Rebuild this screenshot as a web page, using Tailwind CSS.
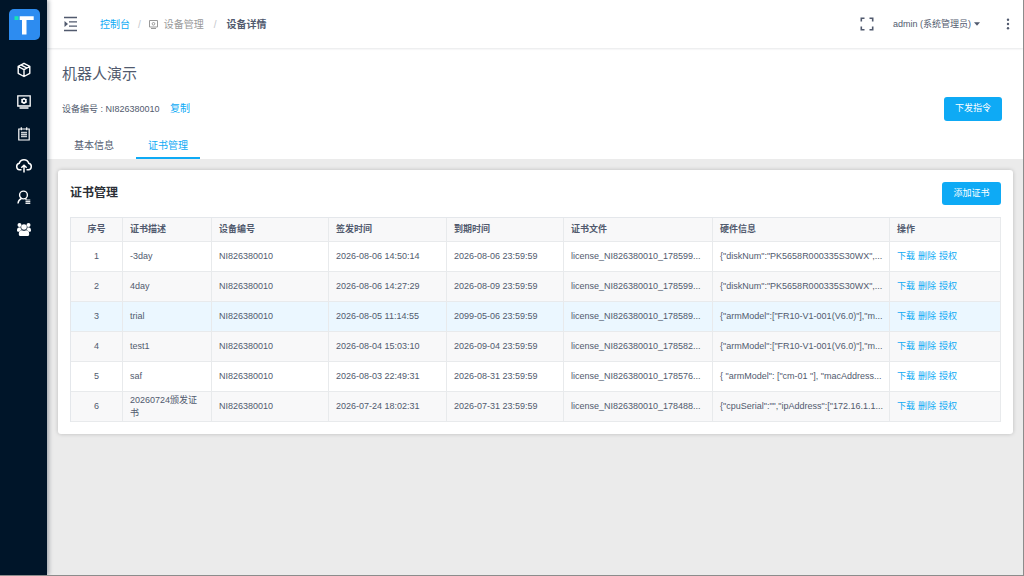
<!DOCTYPE html>
<html lang="zh-CN">
<head>
    <meta charset="UTF-8">
    <meta name="viewport" content="width=device-width, initial-scale=1.0">
    <title>设备详情</title>
    <script src="https://cdn.jsdelivr.net/npm/@tailwindcss/browser@4"></script>
</head>
<body class="flex min-h-screen bg-[#ebebeb] border-r border-b border-[#8c8c8c] font-['Liberation_Sans','Noto_Sans_CJK_SC',sans-serif] text-[9px] leading-[13px] text-[#515a6e]">
    <!-- Menu lateral -->
    <aside class="relative z-10 w-[47px] shrink-0 bg-[#001529] text-white shadow-[2px_0_4px_rgba(0,21,41,0.3)]">
        <a href="#" aria-label="首页" class="flex h-[48px] items-center justify-center pl-px">
            <svg class="size-[31px]" viewBox="0 0 31 31">
                <path d="M5 0h21a5 5 0 0 1 5 5v21a5 5 0 0 1-5 5H0V5a5 5 0 0 1 5-5z" fill="#2d8cf0"/>
                <path d="M10.700 7.200h14v3.800h-7.200v14.500h-4.500V11h-2.300z" fill="#fff"/>
                <path d="M5.500 7.200h4v3.800h-4z" fill="#19e5b4"/>
            </svg>
        </a>
        <nav class="flex flex-col items-center gap-4 pt-[14px]">
            <a href="#" aria-label="产品">
                <svg class="size-4" viewBox="0 0 16 16" fill="none" stroke="currentColor" stroke-width="1.4" stroke-linejoin="round">
                    <path d="M8 1.300l5.800 3v7L8 14.500l-5.800-3.200v-7zM2.200 4.500L8 7.700l5.800-3.200M8 7.700v6.500M4.800 2.900l6.300 3.300"/>
                </svg>
            </a>
            <a href="#" aria-label="设备">
                <svg class="size-4" viewBox="0 0 16 16" fill="none" stroke="currentColor" stroke-width="1.3">
                    <path d="M1.800 1.800h12.400v10.200H1.800zM3.500 14h9"/>
                    <circle cx="8" cy="6.900" r="1.900" stroke-width="1.500"/>
                    <path d="M8 3.900v1M8 8.900v1M5.400 5.400l.8.500M9.800 7.900l.8.500M10.600 5.400l-.8.500M6.200 7.900l-.8.500"/>
                </svg>
            </a>
            <a href="#" aria-label="任务">
                <svg class="size-4" viewBox="0 0 16 16" fill="none" stroke="currentColor" stroke-width="1.2">
                    <path d="M2.800 3h10.400v11H2.800zM5.300 1.300v3M10.700 1.300v3"/>
                    <path d="M5 6.500h6M5 8.500h6M5 10.500h6" stroke-width="1.500" opacity=".8"/>
                </svg>
            </a>
            <a href="#" aria-label="升级">
                <svg class="h-4 w-[18px]" viewBox="0 0 18 16" fill="none" stroke="currentColor" stroke-width="1.5">
                    <path d="M6.500 11.800H4.600A3.300 3.300 0 0 1 4.300 5.300 4.900 4.900 0 0 1 13.700 5.300 3.300 3.300 0 0 1 13.400 11.800h-1.900M9 14.500V7.500M6.300 9.800L9 7.200l2.700 2.600"/>
                </svg>
            </a>
            <a href="#" aria-label="用户">
                <svg class="size-4" viewBox="0 0 16 16" fill="none" stroke="currentColor" stroke-width="1.4">
                    <circle cx="7.500" cy="5" r="3.900"/>
                    <path d="M2 13.500c.2-2.500 1.500-4.200 3.400-5M9.300 8.500l1.200 1"/>
                    <path d="M9.500 10h4.800M9.500 11.700h4.800M9.500 13.400h4.800" stroke-width="1.200" opacity=".9"/>
                </svg>
            </a>
            <a href="#" aria-label="用户组">
                <svg class="size-4" viewBox="0 0 16 16" fill="currentColor">
                    <circle cx="3.500" cy="3" r="2"/>
                    <circle cx="12.500" cy="3" r="2"/>
                    <circle cx="8" cy="5" r="2.800"/>
                    <path d="M1 8.500c0-2.200 1-3.300 3.500-3.200.1 1.200.5 2 1.200 2.700-1.300.3-2 1-2.300 1.700H2c-.7 0-1-.4-1-1.200zM15 8.500c0-2.200-1-3.300-3.500-3.200-.1 1.200-.5 2-1.200 2.700 1.300.3 2 1 2.300 1.700H14c.7 0 1-.4 1-1.200z"/>
                    <path d="M2.800 12c0-2.600 1.200-3.700 3.200-3.700 1.300.7 2.700.7 4 0 2 0 3.200 1.100 3.200 3.700 0 1.400-.6 2-1.700 2h-7c-1.100 0-1.700-.6-1.700-2z"/>
                </svg>
            </a>
        </nav>
    </aside>

    <div class="flex min-w-0 flex-1 flex-col">
        <!-- Barra superior -->
        <header class="relative flex h-[48px] items-center bg-white pr-[9px] pl-4 shadow-[0_1px_2px_rgba(0,21,41,0.1)]">
            <button aria-label="折叠菜单">
                <svg class="h-4 w-[15px]" viewBox="0 0 15 16" fill="none" stroke="#515a6e" stroke-width="1.3">
                    <path d="M1 1.500h13M6 5.800h8M6 10.200h8M1 14.500h13"/>
                    <path d="M1.500 5l3.500 3-3.500 3z" fill="#515a6e" stroke="none"/>
                </svg>
            </button>
            <nav class="ml-[22px] flex items-center text-[10px]">
                <a href="#" class="text-[#0eaaf5]">控制台</a>
                <span class="mx-2 text-[#c5c8ce]">/</span>
                <a href="#" class="flex items-center gap-[6px] text-[#999]">
                    <svg class="size-[9px]" viewBox="0 0 9 9" fill="none" stroke="currentColor">
                        <path d="M.5 .5h8v6.500h-8zM2 8.500h5"/>
                        <circle cx="4.500" cy="3.800" r="1.300"/>
                    </svg>
                    设备管理
                </a>
                <span class="mx-[10px] text-[#c5c8ce]">/</span>
                <span class="font-bold text-[#515a6e]">设备详情</span>
            </nav>
            <div class="ml-auto flex items-center">
                <button aria-label="全屏">
                    <svg class="size-[14px]" viewBox="0 0 14 14" fill="none" stroke="#515a6e" stroke-width="1.600">
                        <path d="M1.300 4.500V1.300H4.500M9.500 1.300h3.200V4.500M12.700 9.500v3.200H9.500M4.500 12.700H1.300V9.500"/>
                    </svg>
                </button>
                <button class="ml-[19px] flex items-center gap-[3px]">
                    admin (系统管理员)
                    <svg class="h-1 w-[6px]" viewBox="0 0 6 4" fill="#515a6e"><path d="M0 .3h6L3 3.700z"/></svg>
                </button>
                <button aria-label="更多" class="ml-[22px]">
                    <svg class="h-[14px] w-[12px]" viewBox="0 0 12 14" fill="#515a6e">
                        <circle cx="6" cy="2.800" r="1.200"/><circle cx="6" cy="7" r="1.200"/><circle cx="6" cy="11.200" r="1.200"/>
                    </svg>
                </button>
            </div>
        </header>

        <!-- Dados do equipamento -->
        <section class="bg-white pt-[16px] pr-[21px] pl-[15px]">
            <h1 class="text-[15px] leading-5 text-[#515a6e]">机器人演示</h1>
            <div class="mt-[13px] flex h-6 items-center justify-between">
                <p>设备编号 : NI826380010 <button class="ml-2 text-[10px] text-[#0eaaf5]">复制</button></p>
                <button class="h-6 w-[58px] rounded-[3px] bg-[#0eaaf5] pb-px text-white">下发指令</button>
            </div>
            <div class="mt-[13px] flex text-[10px]">
                <button class="h-[25px] w-[64px] border-b-2 border-transparent">基本信息</button>
                <button class="ml-[10px] h-[25px] w-[64px] border-b-2 border-[#0eaaf5] text-[#0eaaf5]">证书管理</button>
            </div>
        </section>

        <!-- Certificados -->
        <main class="mt-[11px] mr-[10px] ml-[11px] rounded-[3px] bg-white p-3 shadow-[0_0_4px_rgba(0,0,0,0.2)]">
            <div class="mb-3 flex items-center justify-between">
                <h2 class="text-[12px] font-bold text-[#2b2f36]">证书管理</h2>
                <button class="h-[23px] w-[59px] rounded-[3px] bg-[#0eaaf5] pb-px text-white">添加证书</button>
            </div>
            <table class="w-full table-fixed border-separate border-spacing-0 border-t border-l border-[#e4e7eb] text-left [&_td]:h-[30px] [&_td]:border-r [&_td]:border-b [&_td]:border-[#e8eaec] [&_td]:pl-[7px] [&_th]:h-6 [&_th]:border-r [&_th]:border-b [&_th]:border-[#e8eaec] [&_th]:px-[7px] [&_td]:whitespace-nowrap [&_a]:mr-[3px] [&_a]:inline-block [&_a]:text-[#0eaaf5]">
                <colgroup>
                    <col class="w-[52px]"><col class="w-[89px]"><col class="w-[117px]"><col class="w-[118px]"><col class="w-[117px]"><col class="w-[149px]"><col class="w-[177px]"><col>
                </colgroup>
                <thead class="bg-[#f8f8f9]">
                    <tr><th class="text-center">序号</th><th>证书描述</th><th>设备编号</th><th>签发时间</th><th>到期时间</th><th>证书文件</th><th>硬件信息</th><th>操作</th></tr>
                </thead>
                <tbody>
                    <tr>
                        <td class="pr-[7px] text-center">1</td><td>-3day</td><td>NI826380010</td><td>2026-08-06 14:50:14</td><td>2026-08-06 23:59:59</td><td>license_NI826380010_178599...</td><td>{"diskNum":"PK5658R000335S30WX",...</td>
                        <td><a href="#">下载</a><a href="#">删除</a><a href="#">授权</a></td>
                    </tr>
                    <tr class="bg-[#f8f8f9]">
                        <td class="pr-[7px] text-center">2</td><td>4day</td><td>NI826380010</td><td>2026-08-06 14:27:29</td><td>2026-08-09 23:59:59</td><td>license_NI826380010_178599...</td><td>{"diskNum":"PK5658R000335S30WX",...</td>
                        <td><a href="#">下载</a><a href="#">删除</a><a href="#">授权</a></td>
                    </tr>
                    <tr class="bg-[#ebf7ff]">
                        <td class="pr-[7px] text-center">3</td><td>trial</td><td>NI826380010</td><td>2026-08-05 11:14:55</td><td>2099-05-06 23:59:59</td><td>license_NI826380010_178589...</td><td>{"armModel":["FR10-V1-001(V6.0)"],"m...</td>
                        <td><a href="#">下载</a><a href="#">删除</a><a href="#">授权</a></td>
                    </tr>
                    <tr class="bg-[#f8f8f9]">
                        <td class="pr-[7px] text-center">4</td><td>test1</td><td>NI826380010</td><td>2026-08-04 15:03:10</td><td>2026-09-04 23:59:59</td><td>license_NI826380010_178582...</td><td>{"armModel":["FR10-V1-001(V6.0)"],"m...</td>
                        <td><a href="#">下载</a><a href="#">删除</a><a href="#">授权</a></td>
                    </tr>
                    <tr>
                        <td class="pr-[7px] text-center">5</td><td>saf</td><td>NI826380010</td><td>2026-08-03 22:49:31</td><td>2026-08-31 23:59:59</td><td>license_NI826380010_178576...</td><td>{ "armModel": ["cm-01 "], "macAddress...</td>
                        <td><a href="#">下载</a><a href="#">删除</a><a href="#">授权</a></td>
                    </tr>
                    <tr class="bg-[#f8f8f9]">
                        <td class="pr-[7px] text-center">6</td><td class="pr-[7px] whitespace-normal!">20260724颁发证书</td><td>NI826380010</td><td>2026-07-24 18:02:31</td><td>2026-07-31 23:59:59</td><td>license_NI826380010_178488...</td><td>{"cpuSerial":"","ipAddress":["172.16.1.1...</td>
                        <td><a href="#">下载</a><a href="#">删除</a><a href="#">授权</a></td>
                    </tr>
                </tbody>
            </table>
        </main>
    </div>
</body>
</html>
